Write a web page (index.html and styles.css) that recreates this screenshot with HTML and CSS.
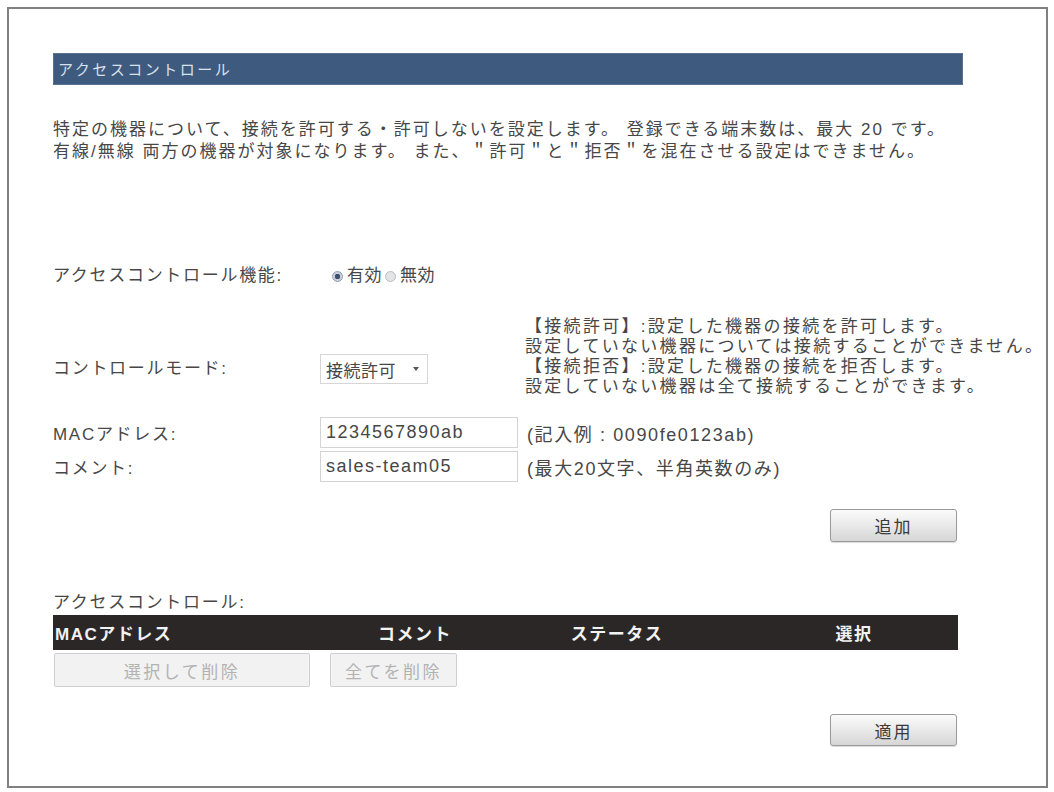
FILE: index.html
```html
<!DOCTYPE html>
<html lang="ja">
<head>
<meta charset="utf-8">
<title>アクセスコントロール</title>
<link rel="stylesheet" href="styles.css">
</head>
<body>
<div class="frame">
  <div class="content">
    <div class="title-bar">アクセスコントロール</div>

    <p class="intro">特定の機器について、接続を許可する・許可しないを設定します。 登録できる端末数は、最大 20 です。<br>有線/無線 両方の機器が対象になります。 また、＂許可＂と＂拒否＂を混在させる設定はできません。</p>

    <div class="form-row row-func">
      <div class="label">アクセスコントロール機能:</div>
      <div class="radios">
        <span class="radio checked"></span><span class="radio-label">有効</span>
        <span class="radio"></span><span class="radio-label">無効</span>
      </div>
    </div>

    <div class="form-row row-mode">
      <div class="label label-mode">コントロールモード:</div>
      <div class="select-cell">
        <div class="select"><span class="select-text">接続許可</span><span class="caret"></span></div>
      </div>
      <div class="help">【接続許可】:設定した機器の接続を許可します。<br>設定していない機器については接続することができません。<br>【接続拒否】:設定した機器の接続を拒否します。<br>設定していない機器は全て接続することができます。</div>
    </div>

    <div class="form-row row-input">
      <div class="label">MACアドレス:</div>
      <div class="field"><input class="text-input" type="text" value="1234567890ab"></div>
      <div class="hint">(記入例 : 0090fe0123ab)</div>
    </div>

    <div class="form-row row-input row-comment">
      <div class="label">コメント:</div>
      <div class="field"><input class="text-input" type="text" value="sales-team05"></div>
      <div class="hint">(最大20文字、半角英数のみ)</div>
    </div>

    <div class="actions actions-add">
      <button class="btn" type="button">追加</button>
    </div>

    <div class="list-label">アクセスコントロール:</div>
    <div class="table-head">
      <div class="th th-mac">MACアドレス</div>
      <div class="th">コメント</div>
      <div class="th">ステータス</div>
      <div class="th">選択</div>
    </div>
    <div class="table-actions">
      <button class="btn-disabled btn-wide" type="button" disabled>選択して削除</button>
      <button class="btn-disabled btn-narrow" type="button" disabled>全てを削除</button>
    </div>

    <div class="actions actions-apply">
      <button class="btn" type="button">適用</button>
    </div>
  </div>
</div>
</body>
</html>
```

FILE: styles.css
```css
* {
  box-sizing: border-box;
}

html, body {
  margin: 0;
  padding: 0;
  background: #ffffff;
}

body {
  font-family: "Liberation Sans", "Noto Sans CJK JP", sans-serif;
  font-size: 17px;
  color: #474747;
}

.frame {
  margin: 7px 0 0 7px;
  width: 1041px;
  height: 781px;
  border: 2px solid #808080;
  padding: 44px 0 0 44px;
  overflow: hidden;
}

.content {
  width: 910px;
}

.title-bar {
  height: 32px;
  line-height: 31px;
  background: #3e5a7f;
  border: 1px solid #5a7394;
  color: #d9e0ea;
  font-size: 15px;
  letter-spacing: 2.5px;
  padding-left: 4px;
}

.intro {
  margin: 34px 0 0 0;
  line-height: 22px;
  font-size: 17px;
  letter-spacing: 2px;
  white-space: nowrap;
}

.form-row {
  display: grid;
  grid-template-columns: 263px 209px auto;
}

.label {
  letter-spacing: 1.7px;
  white-space: nowrap;
}

.row-func {
  margin-top: 101px;
  height: 24px;
  line-height: 24px;
  align-items: center;
}

.radios {
  display: flex;
  align-items: center;
  padding-left: 16px;
}

.radio {
  width: 11px;
  height: 11px;
  border-radius: 50%;
  border: 1px solid #b9bec4;
  background: #e2e4e6;
  margin-right: 4px;
}

.radio.checked {
  border-color: #8f9cac;
  background: radial-gradient(circle, #3f516b 0 2.5px, #c9d2dc 3px);
}

.radio-label {
  margin-right: 3px;
  letter-spacing: 0.5px;
}

.row-mode {
  margin-top: 29px;
}

.label-mode {
  align-self: end;
  margin-bottom: 13px;
  line-height: 30px;
}

.select-cell {
  align-self: end;
  margin-bottom: 13px;
  padding-left: 4px;
}

.select {
  width: 108px;
  height: 30px;
  border: 1px solid #d6d6d6;
  display: flex;
  align-items: center;
  padding-left: 5px;
}

.select-text {
  letter-spacing: 0.5px;
}

.caret {
  width: 0;
  height: 0;
  margin-left: 17px;
  border-left: 3px solid transparent;
  border-right: 3px solid transparent;
  border-top: 4px solid #555555;
}

.help {
  line-height: 20px;
  white-space: nowrap;
  letter-spacing: 2.3px;
}

.row-input {
  margin-top: 20px;
  height: 31px;
  align-items: center;
}

.row-comment {
  margin-top: 3px;
}

.field {
  padding-left: 4px;
  height: 31px;
}

.text-input {
  width: 198px;
  height: 31px;
  border: 1px solid #d4d4d4;
  padding: 0 0 0 5px;
  font-family: "Liberation Sans", "Noto Sans CJK JP", sans-serif;
  font-size: 18px;
  letter-spacing: 1.5px;
  color: #474747;
  background: #ffffff;
  outline: none;
}

.hint {
  padding-left: 2px;
  font-size: 18px;
  letter-spacing: 1.6px;
  white-space: nowrap;
}

.actions {
  display: flex;
  justify-content: flex-end;
  padding-right: 6px;
}

.actions-add {
  margin-top: 27px;
}

.actions-apply {
  margin-top: 27px;
}

.btn {
  width: 127px;
  height: 33px;
  border: 1px solid #9a9a9a;
  border-radius: 3px;
  background: linear-gradient(#fbfbfb, #e9e9e9 50%, #d6d6d6);
  font-family: "Liberation Sans", "Noto Sans CJK JP", sans-serif;
  font-size: 17px;
  color: #3a3a3a;
  letter-spacing: 2px;
  padding: 0;
  box-shadow: 0 1px 1px rgba(0, 0, 0, 0.15);
}

.actions-apply .btn {
  height: 32px;
}

.list-label {
  margin-top: 50px;
  line-height: 22px;
  letter-spacing: 1.7px;
}

.table-head {
  margin-top: 1px;
  width: 905px;
  height: 35px;
  background: #2b2727;
  display: grid;
  grid-template-columns: 293px 138px 266px 208px;
  align-items: center;
}

.th {
  color: #f2f2f2;
  font-weight: bold;
  text-align: center;
  letter-spacing: 1.5px;
}

.th-mac {
  text-align: left;
  padding-left: 2px;
}

.table-actions {
  margin-top: 3px;
  display: flex;
  gap: 20px;
  padding-left: 1px;
}

.btn-disabled {
  height: 34px;
  border: 1px solid #cfcfcf;
  border-radius: 2px;
  background: #f2f2f2;
  color: #b2b2b2;
  font-family: "Liberation Sans", "Noto Sans CJK JP", sans-serif;
  font-size: 17px;
  letter-spacing: 2.5px;
  padding: 0;
}

.btn-wide {
  width: 256px;
}

.btn-narrow {
  width: 127px;
}
```
